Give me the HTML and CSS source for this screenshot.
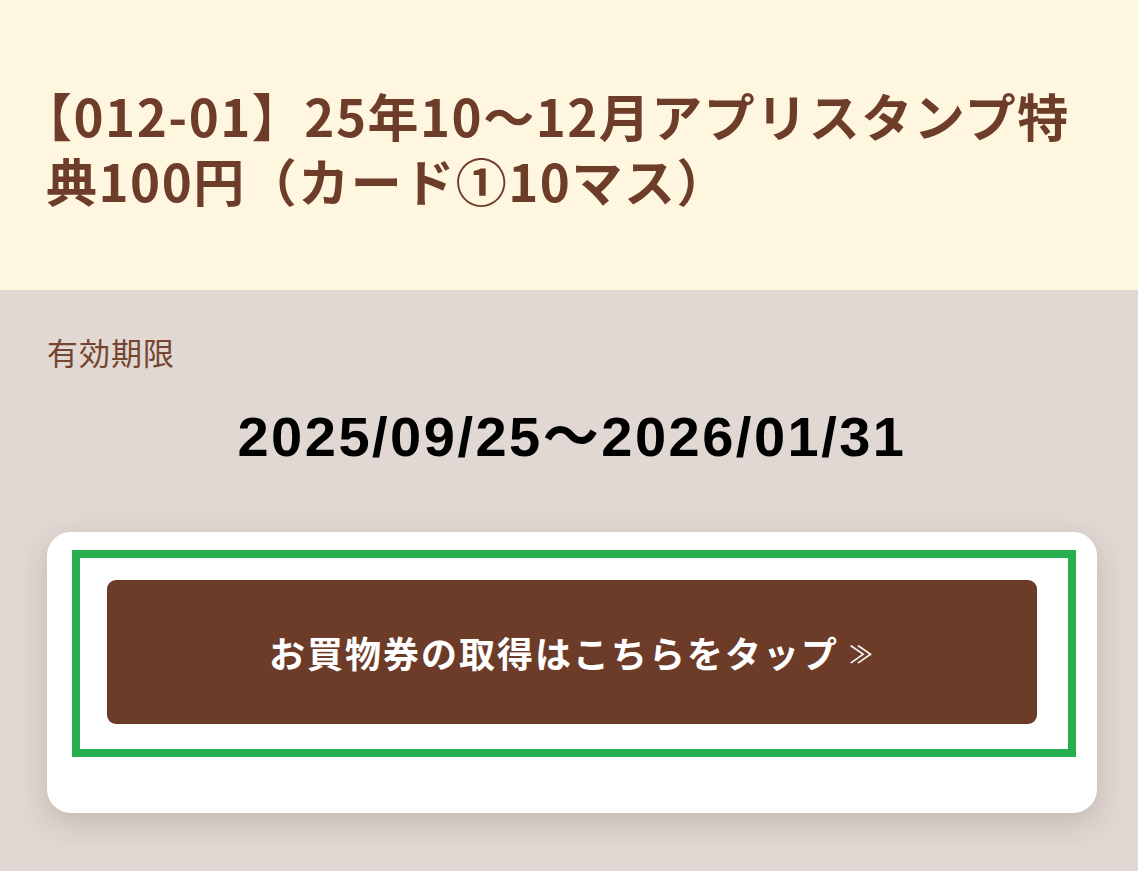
FILE: index.html
```html
<!DOCTYPE html>
<html lang="ja">
<head>
<meta charset="utf-8">
<title>特典</title>
<link rel="stylesheet" href="styles.css">
</head>
<body>
<header class="hero">
  <h1 class="title">【012-01】25年10～12月アプリスタンプ特典100円（カード①10マス）</h1>
</header>
<main class="content">
  <div class="label">有効期限</div>
  <div class="period">2025/09/25～2026/01/31</div>
  <section class="card">
    <div class="frame">
      <a class="btn" href="#">お買物券の取得はこちらをタップ <span class="arrow">≫</span></a>
    </div>
  </section>
</main>
</body>
</html>
```

FILE: styles.css
```css
html, body {
  margin: 0;
  padding: 0;
}
body {
  background: #e1d8d3;
  font-family: "Noto Sans CJK JP", "Noto Sans", sans-serif;
  min-height: 871px;
}
.hero {
  background: #fff6df;
  height: 290px;
  box-sizing: border-box;
  padding: 83px 60px 0 46px;
}
.title {
  margin: 0;
  font-size: 51px;
  line-height: 65px;
  font-weight: 700;
  color: #6e3d2a;
  letter-spacing: 1.5px;
  text-indent: -25px;
}
.content {
  padding: 41px 41px 40px 47px;
}
.label {
  font-size: 31px;
  line-height: 42px;
  color: #74452f;
  letter-spacing: 1px;
}
.period {
  margin-top: 30px;
  text-align: center;
  font-family: "Liberation Sans", "Noto Sans CJK JP", sans-serif;
  font-weight: 700;
  font-size: 56px;
  line-height: 67px;
  letter-spacing: 2.5px;
  color: #000;
}
.card {
  margin-top: 62px;
  background: #fff;
  border-radius: 24px;
  box-shadow: 0 10px 30px rgba(60, 40, 30, 0.18);
  padding: 18px 21px 56px 25px;
}
.frame {
  border: 8px solid #27ae4f;
  padding: 22px 31px 25px 27px;
}
.btn {
  display: flex;
  align-items: center;
  justify-content: center;
  height: 144px;
  background: #6d3c29;
  border-radius: 9px;
  color: #fff;
  text-decoration: none;
  font-weight: 700;
  font-size: 36px;
  letter-spacing: 2px;
}
.arrow {
  font-size: 24px;
  font-weight: 400;
  margin-left: 10px;
}
```
